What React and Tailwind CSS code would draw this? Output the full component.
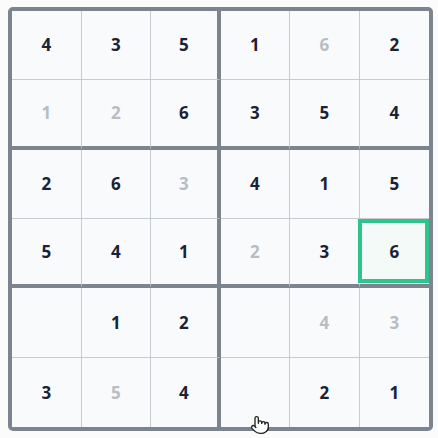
import { Pointer } from 'lucide-react';

const BOARD = [
  ['4', '3', '5', '1', '~6', '2'],
  ['~1', '~2', '6', '3', '5', '4'],
  ['2', '6', '~3', '4', '1', '5'],
  ['5', '4', '1', '~2', '3', '6'],
  ['', '1', '2', '', '~4', '~3'],
  ['3', '~5', '4', '', '2', '1'],
];

const colBorder = (c) => {
  if (c === 2) return 'border-r-4 border-r-[#7b848f]';
  if (c === 5) return '';
  return 'border-r border-r-[#c6cbd1]';
};

const rowBorder = (r) => {
  if (r === 1 || r === 3) return 'border-b-4 border-b-[#7b848f]';
  if (r === 5) return '';
  return 'border-b border-b-[#c6cbd1]';
};

const Cell = ({ value, r, c }) => {
  const faded = value.startsWith('~');
  const digit = faded ? value.slice(1) : value;
  const selected = r === 3 && c === 5;

  return (
    <div
      className={`relative flex items-center justify-center ${colBorder(c)} ${rowBorder(r)} ${
        selected ? 'bg-[#f4faf7]' : 'bg-[#f9fafb]'
      }`}
    >
      {selected && (
        <div className="absolute -left-[2px] right-0 top-0 bottom-[1px] border-4 border-[#2ec48e]" />
      )}
      <span
        className={`relative text-[17px] font-bold ${faded ? 'text-[#b8bdc5]' : 'text-[#1a2236]'}`}
      >
        {digit}
      </span>
    </div>
  );
};

export default function App() {
  return (
    <div className="relative w-[438px] h-[438px] bg-[#fbfbfc] overflow-hidden font-['Open_Sans',sans-serif]">
      <div className="ml-[8px] mt-[7px] w-[425px] h-[424px] border-4 border-[#7b848f] rounded-[5px] overflow-hidden grid grid-cols-6 grid-rows-6">
        {BOARD.map((row, r) =>
          row.map((value, c) => <Cell key={`${r}-${c}`} value={value} r={r} c={c} />)
        )}
      </div>
      <div className="absolute left-[250px] top-[415px]">
        <Pointer size={20} strokeWidth={1.6} fill="#ffffff" color="#222222" />
      </div>
    </div>
  );
}
